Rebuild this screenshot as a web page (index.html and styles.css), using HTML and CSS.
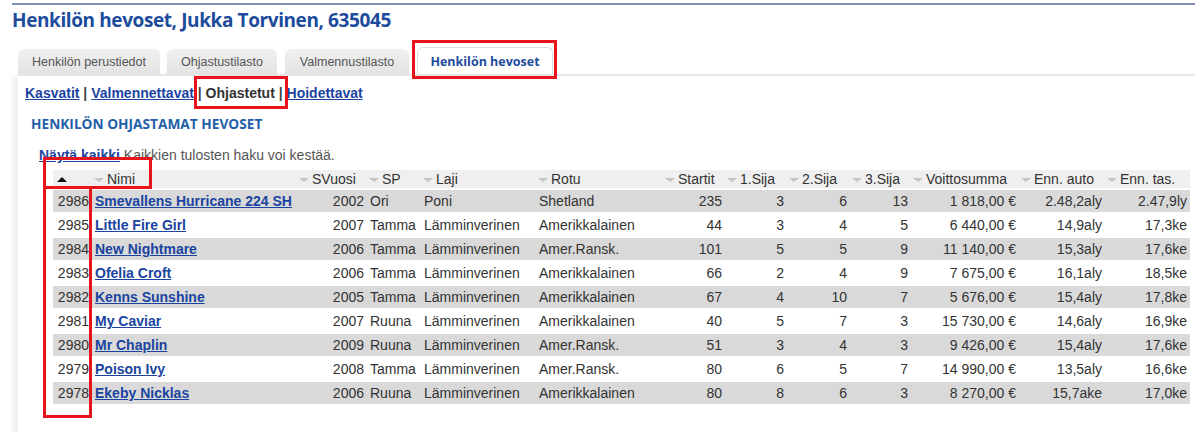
FILE: index.html
```html
<!DOCTYPE html>
<html lang="fi">
<head>
    <meta charset="UTF-8">
    <meta name="viewport" content="width=device-width, initial-scale=1.0">
    <title>Henkilön hevoset</title>
    <link rel="stylesheet" href="styles.css">
</head>
<body>
    <div class="page">
        <div class="topline"></div>
        <h1>Henkilön hevoset, Jukka Torvinen, 635045</h1>

        <!-- Tabs -->
        <ul class="tabs">
            <li class="tab tab-basic">Henkilön perustiedot</li>
            <li class="tab tab-drive">Ohjastustilasto</li>
            <li class="tab tab-train">Valmennustilasto</li>
            <li class="tab active">Henkilön hevoset</li>
        </ul>

        <div class="panel">
            <div class="sublinks">
                <a href="#">Kasvatit</a> | <a href="#">Valmennettavat</a> | <span class="current">Ohjastetut</span> | <a href="#">Hoidettavat</a>
            </div>

            <h2>HENKILÖN OHJASTAMAT HEVOSET</h2>

            <p class="note"><a href="#">Näytä kaikki</a> Kaikkien tulosten haku voi kestää.</p>

            <table class="horses">
                <colgroup>
                    <col style="width:39px"><col style="width:205px"><col style="width:70px"><col style="width:54px">
                    <col style="width:115px"><col style="width:127px"><col style="width:62px"><col style="width:62px">
                    <col style="width:63px"><col style="width:61px"><col style="width:108px"><col style="width:86px">
                    <col style="width:85px">
                </colgroup>
                <thead>
                    <tr>
                        <th class="sorted"><span class="up"></span></th>
                        <th><span class="down"></span>Nimi</th>
                        <th><span class="down"></span>SVuosi</th>
                        <th><span class="down"></span>SP</th>
                        <th><span class="down"></span>Laji</th>
                        <th><span class="down"></span>Rotu</th>
                        <th><span class="down"></span>Startit</th>
                        <th><span class="down"></span>1.Sija</th>
                        <th><span class="down"></span>2.Sija</th>
                        <th><span class="down"></span>3.Sija</th>
                        <th><span class="down"></span>Voittosumma</th>
                        <th><span class="down"></span>Enn. auto</th>
                        <th><span class="down"></span>Enn. tas.</th>
                    </tr>
                </thead>
                <tbody id="rows"></tbody>
            </table>
        </div>

        <!-- red highlight boxes -->
        <div class="mark mark-tab"></div>
        <div class="mark mark-sub"></div>
        <div class="mark mark-head"></div>
        <div class="mark mark-col"></div>
    </div>

    <script>
        // Horse rows
        const horses = [
            [2986, "Smevallens Hurricane 224 SH", 2002, "Ori", "Poni", "Shetland", 235, 3, 6, 13, "1 818,00 €", "2.48,2aly", "2.47,9ly"],
            [2985, "Little Fire Girl", 2007, "Tamma", "Lämminverinen", "Amerikkalainen", 44, 3, 4, 5, "6 440,00 €", "14,9aly", "17,3ke"],
            [2984, "New Nightmare", 2006, "Tamma", "Lämminverinen", "Amer.Ransk.", 101, 5, 5, 9, "11 140,00 €", "15,3aly", "17,6ke"],
            [2983, "Ofelia Croft", 2006, "Tamma", "Lämminverinen", "Amerikkalainen", 66, 2, 4, 9, "7 675,00 €", "16,1aly", "18,5ke"],
            [2982, "Kenns Sunshine", 2005, "Tamma", "Lämminverinen", "Amerikkalainen", 67, 4, 10, 7, "5 676,00 €", "15,4aly", "17,8ke"],
            [2981, "My Caviar", 2007, "Ruuna", "Lämminverinen", "Amerikkalainen", 40, 5, 7, 3, "15 730,00 €", "14,6aly", "16,9ke"],
            [2980, "Mr Chaplin", 2009, "Ruuna", "Lämminverinen", "Amer.Ransk.", 51, 3, 4, 3, "9 426,00 €", "15,4aly", "17,6ke"],
            [2979, "Poison Ivy", 2008, "Tamma", "Lämminverinen", "Amer.Ransk.", 80, 6, 5, 7, "14 990,00 €", "13,5aly", "16,6ke"],
            [2978, "Ekeby Nicklas", 2006, "Ruuna", "Lämminverinen", "Amerikkalainen", 80, 8, 6, 3, "8 270,00 €", "15,7ake", "17,0ke"]
        ];

        const textCols = [3, 4, 5]; // left aligned columns
        const tbody = document.getElementById("rows");
        horses.forEach((h, i) => {
            const tr = document.createElement("tr");
            if (i % 2 === 0) tr.className = "odd";
            h.forEach((v, c) => {
                const td = document.createElement("td");
                if (c === 1) {
                    td.innerHTML = `<a href="#">${v}</a>`;
                } else {
                    td.textContent = v;
                    td.className = textCols.includes(c) ? "txt" : "num";
                }
                tr.appendChild(td);
            });
            tbody.appendChild(tr);
        });
    </script>
</body>
</html>
```

FILE: styles.css
```css
body {
    margin: 0;
    background: #fff;
    font-family: "Liberation Sans", Arial, sans-serif;
    color: #333;
}

.page {
    position: relative;
    padding: 0 5px 0 12px;
    height: 432px;
    overflow: hidden;
}

.topline {
    height: 2px;
    margin-top: 3px;
    background: #7d90b4;
}

h1 {
    font-family: "Open Sans", sans-serif;
    font-size: 19px;
    font-weight: bold;
    color: #1d4c9c;
    margin: 2px 0 0 0;
    line-height: 26px;
    letter-spacing: -0.4px;
}

/* Tabs */
.tabs {
    list-style: none;
    margin: 16px 0 0 6px;
    padding: 0;
    display: flex;
    gap: 8px;
    height: 25px;
    align-items: flex-end;
}

.tab {
    height: 25px;
    line-height: 27px;
    box-sizing: border-box;
    background: linear-gradient(#f0f0f0, #e3e3e3);
    border-radius: 6px 6px 0 0;
    font-size: 12.5px;
    color: #555;
    text-align: center;
}

.tab-basic { width: 142px; }
.tab-drive { width: 110px; margin-left: -1px; }
.tab-train { width: 124px; }

.tab.active {
    width: 136px;
    height: 27px;
    line-height: 28px;
    background: #fff;
    border: 1px solid #ddd;
    border-bottom: none;
    font-family: "Open Sans", sans-serif;
    font-weight: bold;
    color: #1d4c9c;
    font-size: 12.5px;
}

/* Panel */
.panel {
    margin-left: 6px;
    padding: 8px 0 40px 7px;
    background: #fff;
    box-shadow: -4px 2px 6px rgba(0, 0, 0, 0.08);
    border-top: 2px solid #e6e6e6;
}

.sublinks {
    font-size: 14px;
    font-weight: bold;
    color: #444;
    line-height: 18px;
}

.sublinks a {
    color: #1a44a0;
}

.sublinks .current {
    color: #333;
}

h2 {
    font-family: "Open Sans", sans-serif;
    font-size: 13.7px;
    font-weight: bold;
    color: #2160a8;
    margin: 13px 0 0 6px;
    line-height: 18px;
}

.note {
    font-size: 14px;
    color: #555;
    margin: 13px 0 0 14px;
    line-height: 18px;
}

.note a {
    color: #1a44a0;
    font-weight: bold;
}

/* Table */
.horses {
    margin: 4px 0 0 28px;
    border-collapse: separate;
    border-spacing: 0 2px;
    table-layout: fixed;
    width: 1137px;
    font-size: 14px;
}

.horses th {
    background: #efefef;
    font-weight: normal;
    text-align: left;
    height: 18px;
    padding: 0 2px;
    color: #333;
    white-space: nowrap;
}

.horses td {
    height: 22px;
    padding: 0 3px;
    white-space: nowrap;
    color: #333;
}

.horses tr.odd td {
    background: #d9d9d9;
}

.horses td.num {
    text-align: right;
}

.horses td a {
    color: #1a44a0;
    font-weight: bold;
}

.down {
    display: inline-block;
    width: 0;
    height: 0;
    border-left: 5px solid transparent;
    border-right: 5px solid transparent;
    border-top: 4px solid #c4c4c4;
    margin: 0 3px 2px 0;
}

.up {
    display: inline-block;
    width: 0;
    height: 0;
    border-left: 5px solid transparent;
    border-right: 5px solid transparent;
    border-bottom: 5px solid #111;
    margin: 0 0 2px 2px;
}

/* Red highlight boxes */
.mark {
    position: absolute;
    border: 3px solid #e8141b;
}

.mark-tab { left: 412px; top: 40px; width: 139px; height: 33px; }
.mark-sub { left: 194px; top: 76px; width: 88px; height: 27px; }
.mark-head { left: 43px; top: 157px; width: 103px; height: 26px; }
.mark-col { left: 43px; top: 186px; width: 43px; height: 226px; }
```
